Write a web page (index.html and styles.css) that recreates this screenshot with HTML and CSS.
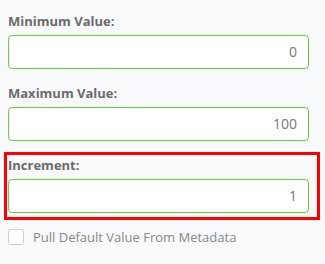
FILE: index.html
```html
<!DOCTYPE html>
<html>
<head>
<meta charset="utf-8">
<link rel="stylesheet" href="styles.css">
</head>
<body>
<div class="form">
  <div class="group">
    <label class="label">Minimum Value:</label>
    <div class="input">0</div>
  </div>
  <div class="group">
    <label class="label">Maximum Value:</label>
    <div class="input">100</div>
  </div>
  <div class="group highlight">
    <label class="label">Increment:</label>
    <div class="input">1</div>
  </div>
  <div class="check-row">
    <span class="checkbox"></span>
    <span class="check-text">Pull Default Value From Metadata</span>
  </div>
</div>
</body>
</html>
```
FILE: styles.css
```css
html, body {
  margin: 0;
  padding: 0;
  background: #f8f9fa;
  font-family: "Open Sans", "Liberation Sans", sans-serif;
}
.form {
  width: 301px;
  padding: 12px 0 0 8px;
  display: flex;
  flex-direction: column;
  gap: 15px;
}
.group {
  display: flex;
  flex-direction: column;
}
.label {
  font-size: 13px;
  line-height: 18px;
  font-weight: 700;
  color: #6b6b6b;
  margin-bottom: 5px;
}
.input {
  box-sizing: border-box;
  height: 34px;
  border: 1px solid #6cc83c;
  border-radius: 4px;
  background: #fff;
  font-size: 14px;
  line-height: 32px;
  color: #777;
  text-align: right;
  padding-right: 11px;
}
.highlight {
  border: 3px solid #ff0000;
  margin: -4px -11px -7px -4px;
  padding: 1px 8px 4px 1px;
}
.check-row {
  display: flex;
  align-items: center;
  gap: 9px;
  height: 18px;
  margin-top: 0;
}
.checkbox {
  box-sizing: border-box;
  width: 16px;
  height: 16px;
  border: 1px solid #cfcfcf;
  border-radius: 3px;
  background: #fff;
}
.check-text {
  font-size: 13px;
  color: #888;
}
```
